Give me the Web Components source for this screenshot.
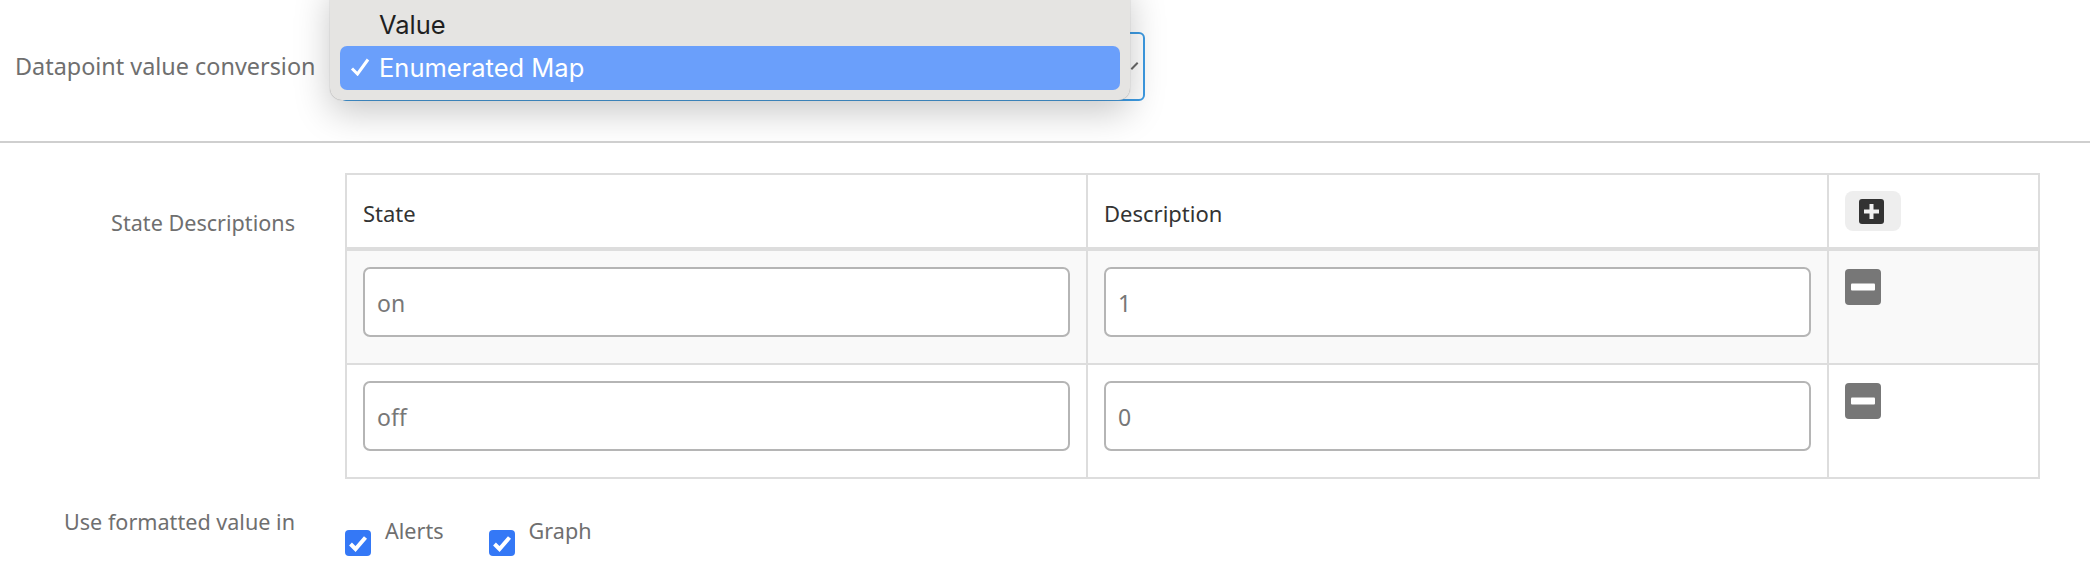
<!DOCTYPE html>
<html lang="en">
<head>
<meta charset="UTF-8">
<title>Datapoint value conversion</title>
<style>
  html, body { margin: 0; background: #fff; height: 586px; overflow: hidden; }
  body { font-family: "Noto Sans", "Liberation Sans", sans-serif; color: #6f6f6f; }
</style>

<template id="conversion-row-template">
  <style>
    :host { display: flex; height: 141px; border-bottom: 2px solid #cfcfcf; position: relative; overflow: hidden; }
    .label { padding: 51px 0 0 15px; width: 340px; box-sizing: border-box; font-size: 23.400px; line-height: 30px; white-space: nowrap; }
    .select { box-sizing: border-box; margin-top: 32px; width: 805px; height: 69px; border: 2px solid #3d9be3; border-radius: 6px; }
    .caret { position: absolute; left: 1130px; top: 65px; width: 9px; height: 2px; background: #6a6a6a; transform: rotate(-45deg); }
  </style>
  <div class="label"><slot name="label"></slot></div>
  <div class="select"></div>
  <span class="caret"></span>
  <slot name="menu"></slot>
</template>

<template id="select-menu-template">
  <style>
    :host { display: block; position: absolute; left: 330px; top: -20px; width: 800px; height: 120px; box-sizing: border-box; padding: 22px 10px 0; background: #e5e4e2; border-radius: 12px; box-shadow: 0 0 1px #888, 0 12px 36px rgba(0,0,0,.22); font-family: Inter, "Liberation Sans", sans-serif; }
  </style>
  <slot></slot>
</template>

<template id="menu-item-template">
  <style>
    :host { display: flex; align-items: center; box-sizing: border-box; height: 44px; border-radius: 7px; color: #1f1f1f; font-size: 25.500px; }
    :host([selected]) { background: #6a9ffb; color: #fff; padding-bottom: 2px; }
    .tick { width: 39px; padding-left: 10px; box-sizing: border-box; }
    svg { display: block; }
  </style>
  <span class="tick"></span><slot></slot>
</template>

<template id="form-row-template">
  <style>
    :host { display: flex; padding-right: 50px; }
    .label { width: 295px; margin-right: 50px; text-align: right; font-size: 21.600px; line-height: 30px; white-space: nowrap; padding-top: var(--label-top, 0); }
  </style>
  <div class="label"><slot name="label"></slot></div>
  <slot></slot>
</template>

<template id="state-table-template">
  <style>
    :host { display: block; flex: 1; box-sizing: border-box; border: 2px solid #ddd; border-width: 2px 2px 0 2px; }
  </style>
  <slot></slot>
</template>

<template id="state-head-template">
  <style>
    :host { display: grid; grid-template-columns: 741px 741px 1fr; height: 72px; border-bottom: 4px solid #ddd; color: #333; font-size: 22px; }
    ::slotted(*) { box-sizing: border-box; padding-left: 16px; border-right: 2px solid #ddd; display: flex; align-items: center; }
    ::slotted(:not(:last-child)) { padding-top: 3px; }
    ::slotted(:last-child) { border-right: 0; }
  </style>
  <slot></slot>
</template>

<template id="state-row-template">
  <style>
    :host { display: grid; grid-template-columns: 741px 741px 1fr; height: 114px; box-sizing: border-box; border-bottom: 2px solid #ddd; }
    :host([shaded]) { background: #f9f9f9; }
    ::slotted(*) { box-sizing: border-box; padding: 16px; border-right: 2px solid #ddd; }
    ::slotted(:last-child) { border-right: 0; }
  </style>
  <slot></slot>
</template>

<template id="text-field-template">
  <style>
    :host { display: flex; align-items: center; box-sizing: border-box; height: 70px; padding: 2px 0 0 12px; background: #fff; border: 2px solid #b5b5b5; border-radius: 7px; font-size: 23px; color: #777; }
  </style>
  <slot></slot>
</template>

<template id="add-button-template">
  <style>
    :host { display: flex; align-items: center; padding-left: 14px; box-sizing: border-box; width: 56px; height: 40px; background: #eee; border-radius: 8px; }
    svg { display: block; }
  </style>
  <svg width="25" height="25" viewBox="0 0 25 25"><rect width="25" height="25" rx="3" fill="#333"/><path d="M10.500 5h4v5.500H20v4h-5.500V20h-4v-5.500H5v-4h5.500z" fill="#f2f2f2"/></svg>
</template>

<template id="remove-button-template">
  <style>
    :host { display: block; width: 36px; height: 36px; margin-top: 2px; }
    svg { display: block; }
  </style>
  <svg width="36" height="36" viewBox="0 0 36 36"><rect width="36" height="36" rx="4" fill="#777"/><rect x="6" y="14.500" width="24" height="7" rx="1" fill="#fff"/></svg>
</template>

<template id="check-box-template">
  <style>
    :host { display: flex; align-items: flex-start; padding-top: 9px; font-size: 21.600px; line-height: 30px; margin-right: 45px; }
    svg { display: block; margin: 14px 14px 0 0; }
  </style>
  <svg width="26" height="26" viewBox="0 0 26 26"><rect width="26" height="26" rx="4" fill="#3478f6"/><path d="M5.500 14l5 5 10-11.500" fill="none" stroke="#fff" stroke-width="4"/></svg>
  <slot></slot>
</template>

<template id="check-group-template">
  <style>
    :host { display: flex; }
  </style>
  <slot></slot>
</template>

<script>
  function shadowFrom(el, id) {
    let template = document.getElementById(id)
    el.attachShadow({ mode: "open" }).appendChild(template.content.cloneNode(true))
  }

  // every element here is only a template plus slots
  const plain = {
    "conversion-row": "conversion-row-template",
    "select-menu": "select-menu-template",
    "form-row": "form-row-template",
    "state-table": "state-table-template",
    "state-head": "state-head-template",
    "state-row": "state-row-template",
    "text-field": "text-field-template",
    "add-button": "add-button-template",
    "remove-button": "remove-button-template",
    "check-box": "check-box-template",
    "check-group": "check-group-template"
  }
  for (let name in plain) {
    customElements.define(name, class extends HTMLElement {
      constructor() {
        super()
        shadowFrom(this, plain[name])
      }
    })
  }

  class MenuItem extends HTMLElement {
    constructor() {
      super()
      shadowFrom(this, "menu-item-template")
    }
    connectedCallback() {
      if (this.hasAttribute("selected")) {
        this.shadowRoot.querySelector(".tick").innerHTML =
          '<svg width="20" height="18" viewBox="0 0 20 18"><path d="M2 10.500l5.500 5.500L18 1.500" fill="none" stroke="#fff" stroke-width="3"/></svg>'
      }
    }
  }
  customElements.define("menu-item", MenuItem)
</script>
</head>
<body>
  <conversion-row>
    <span slot="label">Datapoint value conversion</span>
    <select-menu slot="menu">
      <menu-item>Value</menu-item>
      <menu-item selected>Enumerated Map</menu-item>
    </select-menu>
  </conversion-row>

  <form-row style="margin-top:30px;--label-top:35px">
    <span slot="label">State Descriptions</span>
    <state-table>
      <state-head>
        <div>State</div>
        <div>Description</div>
        <div><add-button></add-button></div>
      </state-head>
      <state-row shaded>
        <div><text-field>on</text-field></div>
        <div><text-field>1</text-field></div>
        <div><remove-button></remove-button></div>
      </state-row>
      <state-row>
        <div><text-field>off</text-field></div>
        <div><text-field>0</text-field></div>
        <div><remove-button></remove-button></div>
      </state-row>
    </state-table>
  </form-row>

  <form-row style="margin-top:28px">
    <span slot="label">Use formatted value in</span>
    <check-group>
      <check-box>Alerts</check-box>
      <check-box>Graph</check-box>
    </check-group>
  </form-row>
</body>
</html>
